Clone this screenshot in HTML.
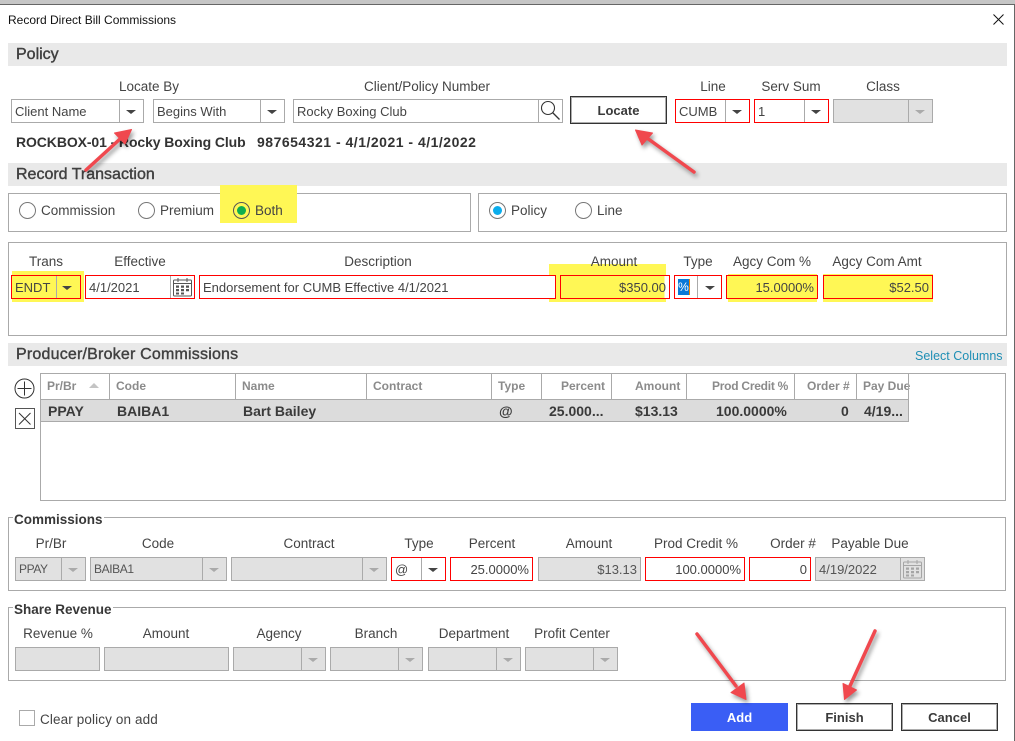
<!DOCTYPE html>
<html><head><meta charset="utf-8"><title>Record Direct Bill Commissions</title>
<style>
html,body{margin:0;padding:0;background:#fff}
#p{position:relative;width:1015px;height:741px;overflow:hidden;background:#fff;font-family:"Liberation Sans",sans-serif;font-size:13.5px;color:#444}
#p div{position:absolute;box-sizing:border-box;white-space:nowrap}
.band{left:8px;width:999px;height:23px;background:#e9e9e9;font-size:16px;line-height:24px;padding-left:8px;color:#404040;-webkit-text-stroke:.4px #404040}
.l{width:200px;text-align:center;height:18px;line-height:20px;color:#444}
.t{height:18px;line-height:20px}
.c{height:24px;border:1px solid #aaa;background:#fff;line-height:23px;padding-left:3px;color:#444;font-size:13px}
.r{border-color:#f00}
.g{background:#e1e1e1;border-color:#aaa;color:#555}
.d{top:-1px;bottom:-1px;width:1px;background:#aaa}
.r .d{top:0;bottom:0}
.a{top:10px;margin-left:1px;width:0;height:0;border-left:5px solid transparent;border-right:5px solid transparent;border-top:4px solid #444}
.g .a{border-top-color:#aaa}
.n{text-align:right;padding:0 3px 0 0}
.box{border:1px solid #aaa}
.rad{width:17px;height:17px;border-radius:50%;border:1px solid #777;background:#fff}
.y{background:#fff755}
.h{top:374px;height:25px;line-height:24px;font-size:12px;font-weight:bold;color:#8b8b8b}
.v{top:374px;width:1px;height:25px;background:#aaa}
.w{top:400px;height:22px;line-height:22px;font-size:14px;font-weight:bold;color:#3a3a3a}
.leg{background:#fff;font-weight:bold;font-size:13.5px;height:16px;line-height:17px;color:#383838;padding:0 1px}
.btn{top:703px;width:97px;height:28px;border:1px solid #333;box-shadow:inset 0 0 0 1px rgba(51,51,51,.4);background:#fff;text-align:center;line-height:27px;font-weight:bold;font-size:13px;color:#3a3a3a}
</style></head><body><div id="p">

<div style="left:0;top:0;width:1015px;height:4px;background:#c6c6c6"></div>
<div style="left:0;top:4px;width:1015px;height:1px;background:#666"></div>
<div style="left:1014px;top:4px;width:1px;height:737px;background:#666"></div>
<div class="t" style="left:8px;top:10px;font-size:12px;color:#111">Record Direct Bill Commissions</div>
<svg style="position:absolute;left:993px;top:14px" width="11" height="11" viewBox="0 0 11 11"><path d="M.5.5l10 10M10.5.5l-10 10" stroke="#111" fill="none"/></svg>

<div class="band" style="top:43px">Policy</div>
<div class="l" style="left:49px;top:77px">Locate By</div>
<div class="l" style="left:327px;top:77px">Client/Policy Number</div>
<div class="l" style="left:613px;top:77px">Line</div>
<div class="l" style="left:691px;top:77px">Serv Sum</div>
<div class="l" style="left:783px;top:77px">Class</div>

<div class="c" style="left:11px;top:99px;width:133px">Client Name<div class="d" style="left:107px"></div><div class="a" style="left:113px"></div></div>
<div class="c" style="left:153px;top:99px;width:132px">Begins With<div class="d" style="left:106px"></div><div class="a" style="left:112px"></div></div>
<div class="c" style="left:293px;top:99px;width:270px">Rocky Boxing Club<div class="d" style="left:244px"></div>
<svg style="position:absolute;left:245px;top:-1px" width="22" height="22" viewBox="0 0 22 22"><circle cx="9" cy="9" r="6.500" fill="none" stroke="#333" stroke-width="1.100"/><path d="M13.500 13.500l7 7" stroke="#333" stroke-width="1.300"/></svg></div>
<div class="btn" style="left:570px;top:96px">Locate</div>
<div class="c r" style="left:675px;top:99px;width:75px">CUMB<div class="d" style="left:49px"></div><div class="a" style="left:55px"></div></div>
<div class="c r" style="left:754px;top:99px;width:75px">1<div class="d" style="left:49px"></div><div class="a" style="left:55px"></div></div>
<div class="c g" style="left:833px;top:99px;width:100px"><div class="d" style="left:74px"></div><div class="a" style="left:80px"></div></div>

<div class="t" style="left:16px;top:132px;font-size:14px;font-weight:bold;color:#333;letter-spacing:-.1px">ROCKBOX-01 - Rocky Boxing Club</div>
<div class="t" style="left:257px;top:132px;font-size:14px;font-weight:bold;color:#333;letter-spacing:.5px">987654321 - 4/1/2021 - 4/1/2022</div>

<div class="band" style="top:163px">Record Transaction</div>
<div class="box" style="left:8px;top:193px;width:463px;height:39px"></div>
<div class="box" style="left:478px;top:193px;width:529px;height:39px"></div>
<div class="y" style="left:220px;top:185px;width:77px;height:38px"></div>
<div class="rad" style="left:19px;top:202px"></div><div class="t" style="left:41px;top:201px">Commission</div>
<div class="rad" style="left:138px;top:202px"></div><div class="t" style="left:160px;top:201px">Premium</div>
<div class="rad" style="left:233px;top:202px;background:#fff755;border-color:#555"><div style="left:3px;top:3px;width:9px;height:9px;border-radius:50%;background:#0fae4f"></div></div><div class="t" style="left:255px;top:201px">Both</div>
<div class="rad" style="left:489px;top:202px"><div style="left:3px;top:3px;width:9px;height:9px;border-radius:50%;background:#0badec"></div></div><div class="t" style="left:511px;top:201px">Policy</div>
<div class="rad" style="left:575px;top:202px"></div><div class="t" style="left:597px;top:201px">Line</div>

<div class="box" style="left:8px;top:242px;width:999px;height:94px"></div>
<div class="y" style="left:12px;top:271px;width:72px;height:31px"></div>
<div class="y" style="left:549px;top:264px;width:117px;height:38px"></div>
<div class="y" style="left:728px;top:274px;width:89px;height:28px"></div>
<div class="y" style="left:823px;top:274px;width:110px;height:28px"></div>
<div class="l" style="left:-54px;top:252px">Trans</div>
<div class="l" style="left:40px;top:252px">Effective</div>
<div class="l" style="left:278px;top:252px">Description</div>
<div class="l" style="left:514px;top:252px">Amount</div>
<div class="l" style="left:598px;top:252px">Type</div>
<div class="l" style="left:672px;top:252px">Agcy Com %</div>
<div class="l" style="left:777px;top:252px">Agcy Com Amt</div>

<div class="c r" style="left:11px;top:275px;width:70px;background:#fff755">ENDT<div class="d" style="left:44px"></div><div class="a" style="left:49px"></div></div>
<div class="c r" style="left:85px;top:275px;width:110px">4/1/2021<div class="d" style="left:84px"></div>
<svg style="position:absolute;left:86px;top:1px" width="21" height="20" viewBox="0 0 21 20"><rect x="1.500" y="3" width="18" height="16" rx="1" fill="none" stroke="#555"/><path d="M1.500 6.500h18M6 1v4M15 1v4" stroke="#555" fill="none"/><path d="M4 8.500h3v2.200h-3zM9 8.500h3v2.200h-3zM14 8.500h3v2.200h-3zM4 12h3v2.200h-3zM9 12h3v2.200h-3zM14 12h3v2.200h-3zM4 15.500h3v2h-3zM9 15.500h3v2h-3z" fill="#555"/></svg></div>
<div class="c r" style="left:199px;top:275px;width:357px">Endorsement for CUMB Effective 4/1/2021</div>
<div class="c r n" style="left:560px;top:275px;width:110px;background:linear-gradient(90deg,#fff755 0,#fff755 96%,#fff 96%)">$350.00</div>
<div class="c r" style="left:674px;top:275px;width:48px"><div style="left:3px;top:3px;width:12px;height:16px;background:#0a78d7;border-right:1px solid #f08000;color:#fff;font-size:12px;line-height:17px;text-align:center">%</div><div class="d" style="left:22px"></div><div class="a" style="left:29px"></div></div>
<div class="c r n" style="left:726px;top:275px;width:92px;background:#fff755">15.0000%</div>
<div class="c r n" style="left:823px;top:275px;width:110px;background:#fff755">$52.50</div>

<div class="band" style="top:343px;letter-spacing:.2px">Producer/Broker Commissions</div>
<div class="t" style="left:915px;top:346px;font-size:12.500px;color:#1f8fb5">Select Columns</div>

<svg style="position:absolute;left:14px;top:378px" width="21" height="21" viewBox="0 0 21 21"><circle cx="10.500" cy="10.500" r="9.500" fill="none" stroke="#333"/><path d="M10.500 3.500v14M3.500 10.500h14" stroke="#333"/></svg>
<svg style="position:absolute;left:15px;top:408px" width="20" height="21" viewBox="0 0 20 21"><rect x=".5" y=".5" width="19" height="20" fill="none" stroke="#555"/><path d="M4 5l11.500 11.500M15.500 5l-11.500 11.500" stroke="#333"/></svg>

<div class="box" style="left:40px;top:373px;width:966px;height:128px"></div>
<div class="h" style="left:47px">Pr/Br</div>
<div style="left:89px;top:383px;width:0;height:0;border-left:5px solid transparent;border-right:5px solid transparent;border-bottom:5px solid #c4c4c4"></div>
<div class="h" style="left:116px">Code</div>
<div class="h" style="left:242px">Name</div>
<div class="h" style="left:373px">Contract</div>
<div class="h" style="left:498px">Type</div>
<div class="h" style="left:561px">Percent</div>
<div class="h" style="left:635px">Amount</div>
<div class="h" style="left:712px;letter-spacing:-.25px">Prod Credit %</div>
<div class="h" style="left:807px">Order #</div>
<div class="h" style="left:863px">Pay Due</div>
<div class="v" style="left:109px"></div><div class="v" style="left:235px"></div><div class="v" style="left:366px"></div><div class="v" style="left:491px"></div><div class="v" style="left:541px"></div><div class="v" style="left:611px"></div><div class="v" style="left:686px"></div><div class="v" style="left:794px"></div><div class="v" style="left:856px"></div><div class="v" style="left:908px"></div>
<div style="left:41px;top:399px;width:868px;height:23px;background:#dcdcdc;border-top:1px solid #aaa;border-bottom:1px solid #aaa;border-right:1px solid #aaa"></div>
<div class="w" style="left:48px">PPAY</div>
<div class="w" style="left:117px">BAIBA1</div>
<div class="w" style="left:243px">Bart Bailey</div>
<div class="w" style="left:499px">@</div>
<div class="w" style="left:549px">25.000...</div>
<div class="w" style="left:635px">$13.13</div>
<div class="w" style="left:716px">100.0000%</div>
<div class="w" style="left:841px">0</div>
<div class="w" style="left:864px">4/19...</div>

<div class="box" style="left:8px;top:517px;width:998px;height:74px"></div>
<div class="leg" style="left:13px;top:511px">Commissions</div>
<div class="l" style="left:-49px;top:534px">Pr/Br</div>
<div class="l" style="left:58px;top:534px">Code</div>
<div class="l" style="left:209px;top:534px">Contract</div>
<div class="l" style="left:319px;top:534px">Type</div>
<div class="l" style="left:392px;top:534px">Percent</div>
<div class="l" style="left:489px;top:534px">Amount</div>
<div class="l" style="left:596px;top:534px">Prod Credit %</div>
<div class="l" style="left:693px;top:534px">Order #</div>
<div class="l" style="left:770px;top:534px">Payable Due</div>
<div class="c g" style="left:15px;top:557px;width:71px;font-size:12px;letter-spacing:-.4px">PPAY<div class="d" style="left:45px"></div><div class="a" style="left:51px"></div></div>
<div class="c g" style="left:90px;top:557px;width:137px;font-size:12px;letter-spacing:-.4px">BAIBA1<div class="d" style="left:111px"></div><div class="a" style="left:117px"></div></div>
<div class="c g" style="left:231px;top:557px;width:156px"><div class="d" style="left:130px"></div><div class="a" style="left:136px"></div></div>
<div class="c r" style="left:391px;top:557px;width:55px">@<div class="d" style="left:29px"></div><div class="a" style="left:35px"></div></div>
<div class="c r n" style="left:450px;top:557px;width:83px">25.0000%</div>
<div class="c g n" style="left:538px;top:557px;width:103px">$13.13</div>
<div class="c r n" style="left:645px;top:557px;width:100px">100.0000%</div>
<div class="c r n" style="left:749px;top:557px;width:62px">0</div>
<div class="c g" style="left:815px;top:557px;width:110px">4/19/2022<div class="d" style="left:84px"></div>
<svg style="position:absolute;left:86px;top:1px" width="21" height="20" viewBox="0 0 21 20"><rect x="1.500" y="3" width="18" height="16" rx="1" fill="none" stroke="#a5a5a5"/><path d="M1.500 6.500h18M6 1v4M15 1v4" stroke="#a5a5a5" fill="none"/><path d="M4 8.500h3v2.200h-3zM9 8.500h3v2.200h-3zM14 8.500h3v2.200h-3zM4 12h3v2.200h-3zM9 12h3v2.200h-3zM14 12h3v2.200h-3zM4 15.500h3v2h-3zM9 15.500h3v2h-3z" fill="#a5a5a5"/></svg></div>

<div class="box" style="left:8px;top:607px;width:998px;height:74px"></div>
<div class="leg" style="left:13px;top:601px">Share Revenue</div>
<div class="l" style="left:-42px;top:624px">Revenue %</div>
<div class="l" style="left:66px;top:624px">Amount</div>
<div class="l" style="left:179px;top:624px">Agency</div>
<div class="l" style="left:276px;top:624px">Branch</div>
<div class="l" style="left:374px;top:624px">Department</div>
<div class="l" style="left:472px;top:624px">Profit Center</div>
<div class="c g" style="left:15px;top:647px;width:85px"></div>
<div class="c g" style="left:104px;top:647px;width:125px"></div>
<div class="c g" style="left:233px;top:647px;width:93px"><div class="d" style="left:67px"></div><div class="a" style="left:73px"></div></div>
<div class="c g" style="left:330px;top:647px;width:93px"><div class="d" style="left:67px"></div><div class="a" style="left:73px"></div></div>
<div class="c g" style="left:428px;top:647px;width:93px"><div class="d" style="left:67px"></div><div class="a" style="left:73px"></div></div>
<div class="c g" style="left:525px;top:647px;width:93px"><div class="d" style="left:67px"></div><div class="a" style="left:73px"></div></div>

<div class="box" style="left:19px;top:710px;width:16px;height:16px"></div>
<div class="t" style="left:40px;top:710px;letter-spacing:.12px">Clear policy on add</div>
<div class="btn" style="left:691px;background:#3a5ef5;border-color:#3a5ef5;box-shadow:none;color:#fff">Add</div>
<div class="btn" style="left:796px">Finish</div>
<div class="btn" style="left:901px">Cancel</div>

<svg style="position:absolute;left:0;top:0;filter:drop-shadow(2px 3px 2px rgba(0,0,0,.4))" width="1015" height="741" viewBox="0 0 1015 741">
<g fill="#f0484e" stroke="#f0484e" stroke-linecap="round" stroke-linejoin="round">
<path d="M86 170L120 139" stroke-width="3.500" fill="none"/><path d="M131.500 129.500L125 144L114.500 133z" stroke-width="1"/>
<path d="M694 172L647 138" stroke-width="3.500" fill="none"/><path d="M635.500 130L642 145L652.500 133z" stroke-width="1"/>
<path d="M697 634L736 686" stroke-width="3.500" fill="none"/><path d="M746 699.500L744 683L731 692.500z" stroke-width="1"/>
<path d="M875 631L850 686" stroke-width="3.500" fill="none"/><path d="M844.500 699.500L856.500 690L843 683.500z" stroke-width="1"/>
</g></svg>
</div></body></html>
